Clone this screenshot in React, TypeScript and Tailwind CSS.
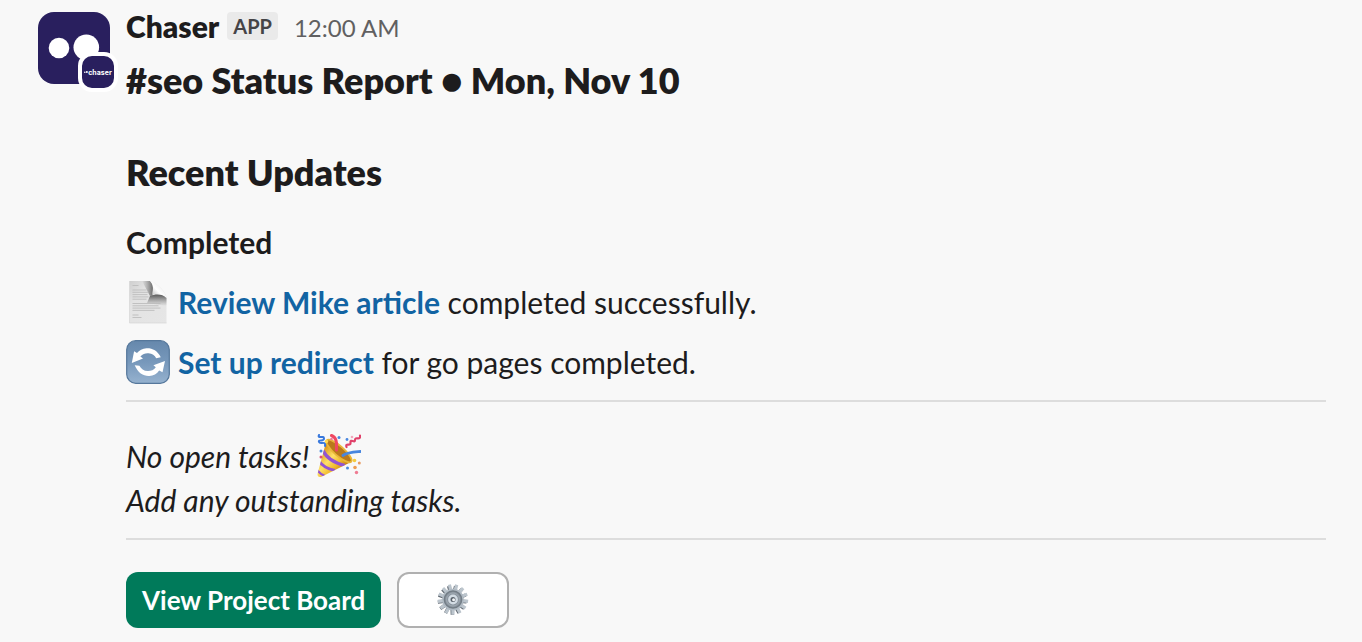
import type { ReactNode } from "react";

function Avatar() {
  return (
    <div className="relative mt-3 size-[72px] shrink-0">
      <svg viewBox="0 0 72 72" className="size-[72px] rounded-2xl bg-[#291f5e]" role="img" aria-label="Chaser avatar">
        <circle cx="21" cy="36" r="10.3" fill="#fff" />
        <circle cx="48.3" cy="35.3" r="12.8" fill="#fff" />
      </svg>

      <div className="absolute top-10 left-10 flex size-10 items-center justify-center rounded-[14px] border-4 border-white bg-[#291f5e]">
        <span className="flex items-center font-['Inter','Lato',sans-serif] text-[7px] leading-none font-bold text-white">
          <svg viewBox="0 0 4 4" className="size-1">
            <circle cx="0.8" cy="2.2" r="0.8" fill="#fff" />
            <circle cx="2.9" cy="2.1" r="1" fill="#fff" />
          </svg>
          chaser
        </span>
      </div>
    </div>
  );
}

function PageIcon() {
  return (
    <svg viewBox="0 0 44 44" className="size-11 shrink-0" aria-hidden="true">
      <defs>
        <linearGradient id="paper" x1="0" y1="0" x2="1" y2="1">
          <stop offset="0" stopColor="#cfcfcf" />
          <stop offset="0.3" stopColor="#e3e3e3" />
          <stop offset="1" stopColor="#e6e6e6" />
        </linearGradient>
        <linearGradient id="shade-top" x1="0" y1="0" x2="1" y2="0">
          <stop offset="0" stopColor="#777" stopOpacity="0" />
          <stop offset="1" stopColor="#555" stopOpacity="0.85" />
        </linearGradient>
        <linearGradient id="shade-side" x1="0" y1="1" x2="0" y2="0">
          <stop offset="0" stopColor="#777" stopOpacity="0" />
          <stop offset="1" stopColor="#505050" stopOpacity="0.95" />
        </linearGradient>
        <linearGradient id="curl" x1="0" y1="1" x2="1" y2="0">
          <stop offset="0" stopColor="#aaa" />
          <stop offset="0.45" stopColor="#fff" />
          <stop offset="1" stopColor="#ddd" />
        </linearGradient>
      </defs>
      <path d="M3.5 1H24C29 2 38 9 40.5 17V43H3.5Z" fill="url(#paper)" />
      <path d="M16 1H24C28 5 27 9 26.5 15L24 16Z" fill="url(#shade-top)" />
      <path d="M24 16C30 13.5 37 14 40.5 18V26L21 23Z" fill="url(#shade-side)" />
      <path d="M24 1C28 5 27 9 26.5 14.5C32 13.5 37 14 40.5 18C39.5 11 31 2.5 24 1Z" fill="url(#curl)" />
      <path
        d="M6.5 5.5h6M6.5 10h14M6.5 12.3h16M6.5 14.6h15M6.5 16.9h16M6.5 19.2h14M6.5 23.5h28M6.5 25.8h26M6.5 28.1h28M6.5 30.4h22M6.5 35h6M6.5 37.5h9"
        stroke="#bcbcbc"
        strokeWidth="0.9"
      />
      <path d="M3.5 1V43H40.5" fill="none" stroke="#d5d5d5" strokeWidth="0.7" />
    </svg>
  );
}

function RefreshIcon() {
  return (
    <svg viewBox="0 0 44 44" className="size-11 shrink-0" aria-hidden="true">
      <defs>
        <linearGradient id="tile" x1="0" y1="0" x2="0" y2="1">
          <stop offset="0" stopColor="#6688ac" />
          <stop offset="0.5" stopColor="#7798bb" />
          <stop offset="1" stopColor="#96b2cf" />
        </linearGradient>
      </defs>
      <rect x="0.7" y="0.7" width="42.6" height="42.6" rx="9" fill="url(#tile)" stroke="#55779b" strokeWidth="1.2" />
      <g fill="#fff">
        <path d="M34.8 17.3C31.5 10.5 26 8 20.5 8.3C16.5 8.6 13.2 10.3 11 13.1L8.1 11.2L5.8 22.9L17 18.4L14.4 16.5C16.8 13.8 19.5 13.1 22.5 13.3C26.2 13.6 28.8 15.4 30.2 18.3Z" />
        <path d="M8.7 25.3C12 33 17.5 36.3 23.3 36C27.5 35.6 31 33.7 33.2 30.4L36.5 32.3L39 21.1L27.4 25.2L29.8 27.3C27.8 30 25 31.2 21.7 31.1C17.8 30.9 15 28.6 13.4 25.7Z" />
      </g>
    </svg>
  );
}

function PartyIcon() {
  return (
    <svg viewBox="0 0 44 44" className="size-11 shrink-0" aria-hidden="true">
      <defs>
        <linearGradient id="cone" x1="0.1" y1="0.3" x2="0.7" y2="0.9">
          <stop offset="0" stopColor="#dc971a" />
          <stop offset="0.4" stopColor="#ffe168" />
          <stop offset="0.7" stopColor="#f0b92c" />
          <stop offset="1" stopColor="#b9730c" />
        </linearGradient>
        <clipPath id="cone-clip">
          <path d="M9.5 6.5L0.5 40C0.3 42.5 2 43.7 4.5 42.7L34 28Z" />
        </clipPath>
      </defs>
      <path d="M9.5 6.5L0.5 40C0.3 42.5 2 43.7 4.5 42.7L34 28Z" fill="url(#cone)" />
      <g clipPath="url(#cone-clip)" fill="none" stroke="#9254d2">
        <path d="M6 16.5Q11 27.5 28 31.5" strokeWidth="3.2" />
        <path d="M2 27Q7 34.5 18 36.5" strokeWidth="3" />
        <path d="M0 36Q3 40 8 42" strokeWidth="2.2" />
      </g>
      <ellipse cx="22" cy="17" rx="4.8" ry="16.2" transform="rotate(-49 22 17)" fill="#b9791c" stroke="#e9b638" strokeWidth="1.8" />
      <g fill="none" strokeLinecap="round">
        <path d="M14.5 1.5C20.5 4 19.5 10 19.5 16" stroke="#ef4862" strokeWidth="3" />
        <path d="M26 21.5C31 18 37 18 43.5 17.5" stroke="#4786df" strokeWidth="2.8" />
        <path d="M2 1C0 5 7 1 7 4.5S1 5 2 8S9 6 8 12" stroke="#3878dc" strokeWidth="2" />
        <path d="M43 1.5C44 7 38 2 38 6S33 4 33.5 8.5S28 8 29.5 13" stroke="#e0416a" strokeWidth="2.2" />
      </g>
      <circle cx="14.5" cy="5" r="1.3" fill="#ef789c" />
      <circle cx="22" cy="3.5" r="1.5" fill="#4a87df" />
      <circle cx="30" cy="5.5" r="1.4" fill="#4a87df" />
      <circle cx="35" cy="3" r="1.3" fill="#f2a6bb" />
      <circle cx="9.5" cy="7.5" r="1.7" fill="#ffd94e" />
      <circle cx="4" cy="17" r="1.5" fill="#4a87df" />
      <circle cx="4" cy="23" r="1.5" fill="#df4d72" />
      <circle cx="37.5" cy="26.5" r="1.8" fill="#f5cc3d" />
      <circle cx="42.3" cy="29" r="1.5" fill="#e89b61" />
      <circle cx="38" cy="33.5" r="1.8" fill="#ef9d53" />
      <circle cx="30.5" cy="34" r="1.5" fill="#4a87df" />
      <circle cx="39.5" cy="38.5" r="1.7" fill="#ef7c93" />
    </svg>
  );
}

const teeth = Array.from({ length: 13 }, (_, i) => 14 + (i * 360) / 13);

function GearIcon() {
  return (
    <svg viewBox="0 0 32 32" className="size-8" aria-hidden="true">
      <g fill="#5f6770" transform="translate(-0.8 0.7)">
        {teeth.map((angle) => (
          <path key={angle} d="M14.3 7L14.2 1H17.5L17.7 7Z" transform={`rotate(${angle} 16 15.5)`} />
        ))}
      </g>
      <g fill="#bcc5cd">
        {teeth.map((angle) => (
          <path key={angle} d="M14.3 7L14.4 0.3H17.6L17.7 7Z" transform={`rotate(${angle} 16 15.5)`} />
        ))}
      </g>
      <circle cx="16" cy="15.5" r="10.8" fill="#b0bac3" />
      <circle cx="16" cy="15.5" r="8.6" fill="#8b959f" stroke="#737d86" strokeWidth="1.5" />
      <circle cx="16" cy="15.5" r="6.5" fill="none" stroke="#a3adb6" strokeWidth="0.8" />
      <circle cx="16" cy="15.5" r="3.7" fill="#58616a" stroke="#d3dce4" strokeWidth="2.4" />
      <circle cx="16.6" cy="15.7" r="1.5" fill="#f1f3f5" />
    </svg>
  );
}

function Update({ icon, title, children }: { icon: ReactNode; title: string; children: ReactNode }) {
  return (
    <li className="flex items-center gap-2">
      {icon}
      <p>
        <a href="#" className="font-bold text-[#1264a3] hover:underline">
          {title}
        </a>{" "}
        {children}
      </p>
    </li>
  );
}

export default function App() {
  return (
    <main className="flex min-h-screen gap-4 bg-[#f8f8f8] pr-9 pb-3 pl-[38px] font-['Lato',sans-serif] text-[30px] leading-[44px] text-[#1d1c1d]">
      <Avatar />

      <article className="min-w-0 flex-1 pt-1">
        <header className="flex h-11 items-center">
          <span className="font-extrabold">Chaser</span>
          <span className="ml-2 rounded bg-[#eaeaea] px-1.5 text-[20px] leading-7 font-bold text-[#454447]">APP</span>
          <time className="ml-4 pt-1 text-[24px] text-[#616061]">12:00 AM</time>
        </header>

        <h1 className="mt-2.5 text-[36px] font-extrabold">#seo Status Report ● Mon, Nov 10</h1>

        <h2 className="mt-12 text-[36px] font-extrabold">Recent Updates</h2>

        <h3 className="mt-[26px] font-bold">Completed</h3>

        <ul className="mt-4 flex flex-col gap-4">
          <Update icon={<PageIcon />} title="Review Mike article">
            completed successfully.
          </Update>
          <Update icon={<RefreshIcon />} title="Set up redirect">
            for go pages completed.
          </Update>
        </ul>

        <hr className="mt-4 border-t-2 border-[#dddddd]" />

        <div className="mt-8 italic">
          <p className="flex items-center gap-2">
            No open tasks! <PartyIcon />
          </p>
          <p>Add any outstanding tasks.</p>
        </div>

        <hr className="mt-4 border-t-2 border-[#dddddd]" />

        <div className="mt-8 flex gap-4">
          <button type="button" className="h-14 rounded-xl bg-[#007a5a] px-4 text-[26px] font-bold text-white">
            View Project Board
          </button>
          <button
            type="button"
            aria-label="Settings"
            className="flex h-14 w-28 items-center justify-center rounded-xl border-2 border-[#b0b0b0] bg-white"
          >
            <GearIcon />
          </button>
        </div>
      </article>
    </main>
  );
}
